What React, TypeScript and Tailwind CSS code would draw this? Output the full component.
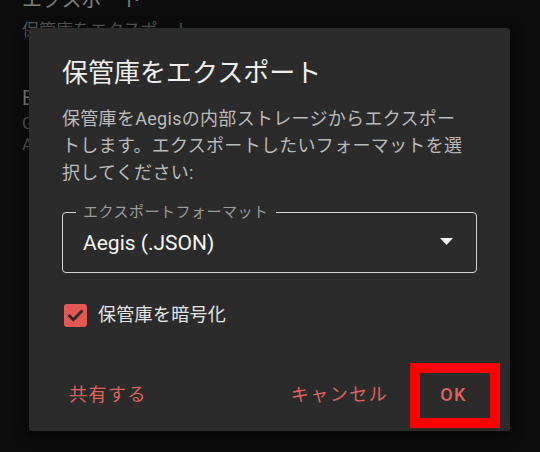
import React from "react";

const font = { fontFamily: "Roboto, 'Noto Sans CJK JP', sans-serif" };

export default function App() {
  return (
    <div
      className="relative w-[540px] h-[452px] overflow-hidden bg-[#0c0c0c]"
      style={font}
    >
      {/* background settings screen */}
      <div className="flex flex-col pl-[22px] whitespace-nowrap">
        <div className="mt-[-12px] text-[20px] leading-[24px] text-[#7e7e7e]">エクスポート</div>
        <div className="mt-[6px] text-[17px] leading-[24px] text-[#555555]">保管庫をエクスポート</div>
        <div className="mt-[44px] text-[20px] leading-[24px] text-[#7e7e7e]">Backup</div>
        <div className="mt-[3px] text-[17px] leading-[21px] text-[#555555]">Google Drive</div>
        <div className="mt-[0px] text-[17px] leading-[21px] text-[#555555]">Android</div>
      </div>

      {/* dialog */}
      <div className="absolute left-[29px] top-[28px] w-[481px] h-[403px] rounded-[3px] bg-[#2b2b2b] shadow-[0_4px_14px_rgba(0,0,0,0.6)] flex flex-col">
        <div className="flex flex-col px-[33px] pt-[30px]">
          <div className="text-[26px] leading-[31px] text-[#f0f0f0] whitespace-nowrap">
            保管庫をエクスポート
          </div>
          <div className="mt-[16px] text-[18px] leading-[27px] tracking-[0.3px] text-[#bababa] whitespace-nowrap flex flex-col">
            <span>保管庫をAegisの内部ストレージからエクスポー</span>
            <span>トします。エクスポートしたいフォーマットを選</span>
            <span>択してください:</span>
          </div>

          <div className="relative mt-[26px] h-[61px] rounded-[4px] border border-[#d4d4d4] flex items-center justify-between pl-[20px] pr-[23px]">
            <span className="absolute left-[13px] top-[-11px] px-[7px] bg-[#2b2b2b] text-[15px] leading-[20px] tracking-[0.5px] text-[#9a9a9a] whitespace-nowrap">
              エクスポートフォーマット
            </span>
            <span className="text-[21px] leading-[28px] text-[#f5f5f5] mt-[1px]">Aegis (.JSON)</span>
            <svg width="13" height="7" viewBox="0 0 13 7" className="mt-[-2px]">
              <polygon points="0,0 13,0 6.5,7" fill="#f2f2f2" />
            </svg>
          </div>

          <div className="mt-[30px] flex items-center gap-[11px] pl-[2px]">
            <div className="w-[23px] h-[23px] rounded-[3px] bg-[#e45853] flex items-center justify-center">
              <svg width="19" height="19" viewBox="0 0 24 24">
                <path d="M4.5 12.5l4.8 4.8L19.5 7" fill="none" stroke="#2b2b2b" strokeWidth="3.6" strokeLinecap="square" strokeLinejoin="miter" />
              </svg>
            </div>
            <span className="text-[18px] leading-[24px] tracking-[0.3px] text-[#e6e6e6] whitespace-nowrap">保管庫を暗号化</span>
          </div>
        </div>

        <div className="mt-[50px] flex items-center justify-between pl-[40px] pr-[43px] h-[36px]">
          <span className="text-[18px] leading-[24px] tracking-[1.5px] font-normal text-[#de635e] whitespace-nowrap">共有する</span>
          <div className="flex items-center gap-[52px]">
            <span className="text-[18px] leading-[24px] tracking-[1.5px] font-normal text-[#de635e] whitespace-nowrap">キャンセル</span>
            <span className="text-[18px] leading-[24px] tracking-[1.5px] font-medium text-[#de635e] whitespace-nowrap">OK</span>
          </div>
        </div>

        {/* highlight annotation */}
        <div className="absolute left-[381px] top-[335px] w-[90px] h-[65px] border-[10px] border-[#ff0000]" />
      </div>
    </div>
  );
}
